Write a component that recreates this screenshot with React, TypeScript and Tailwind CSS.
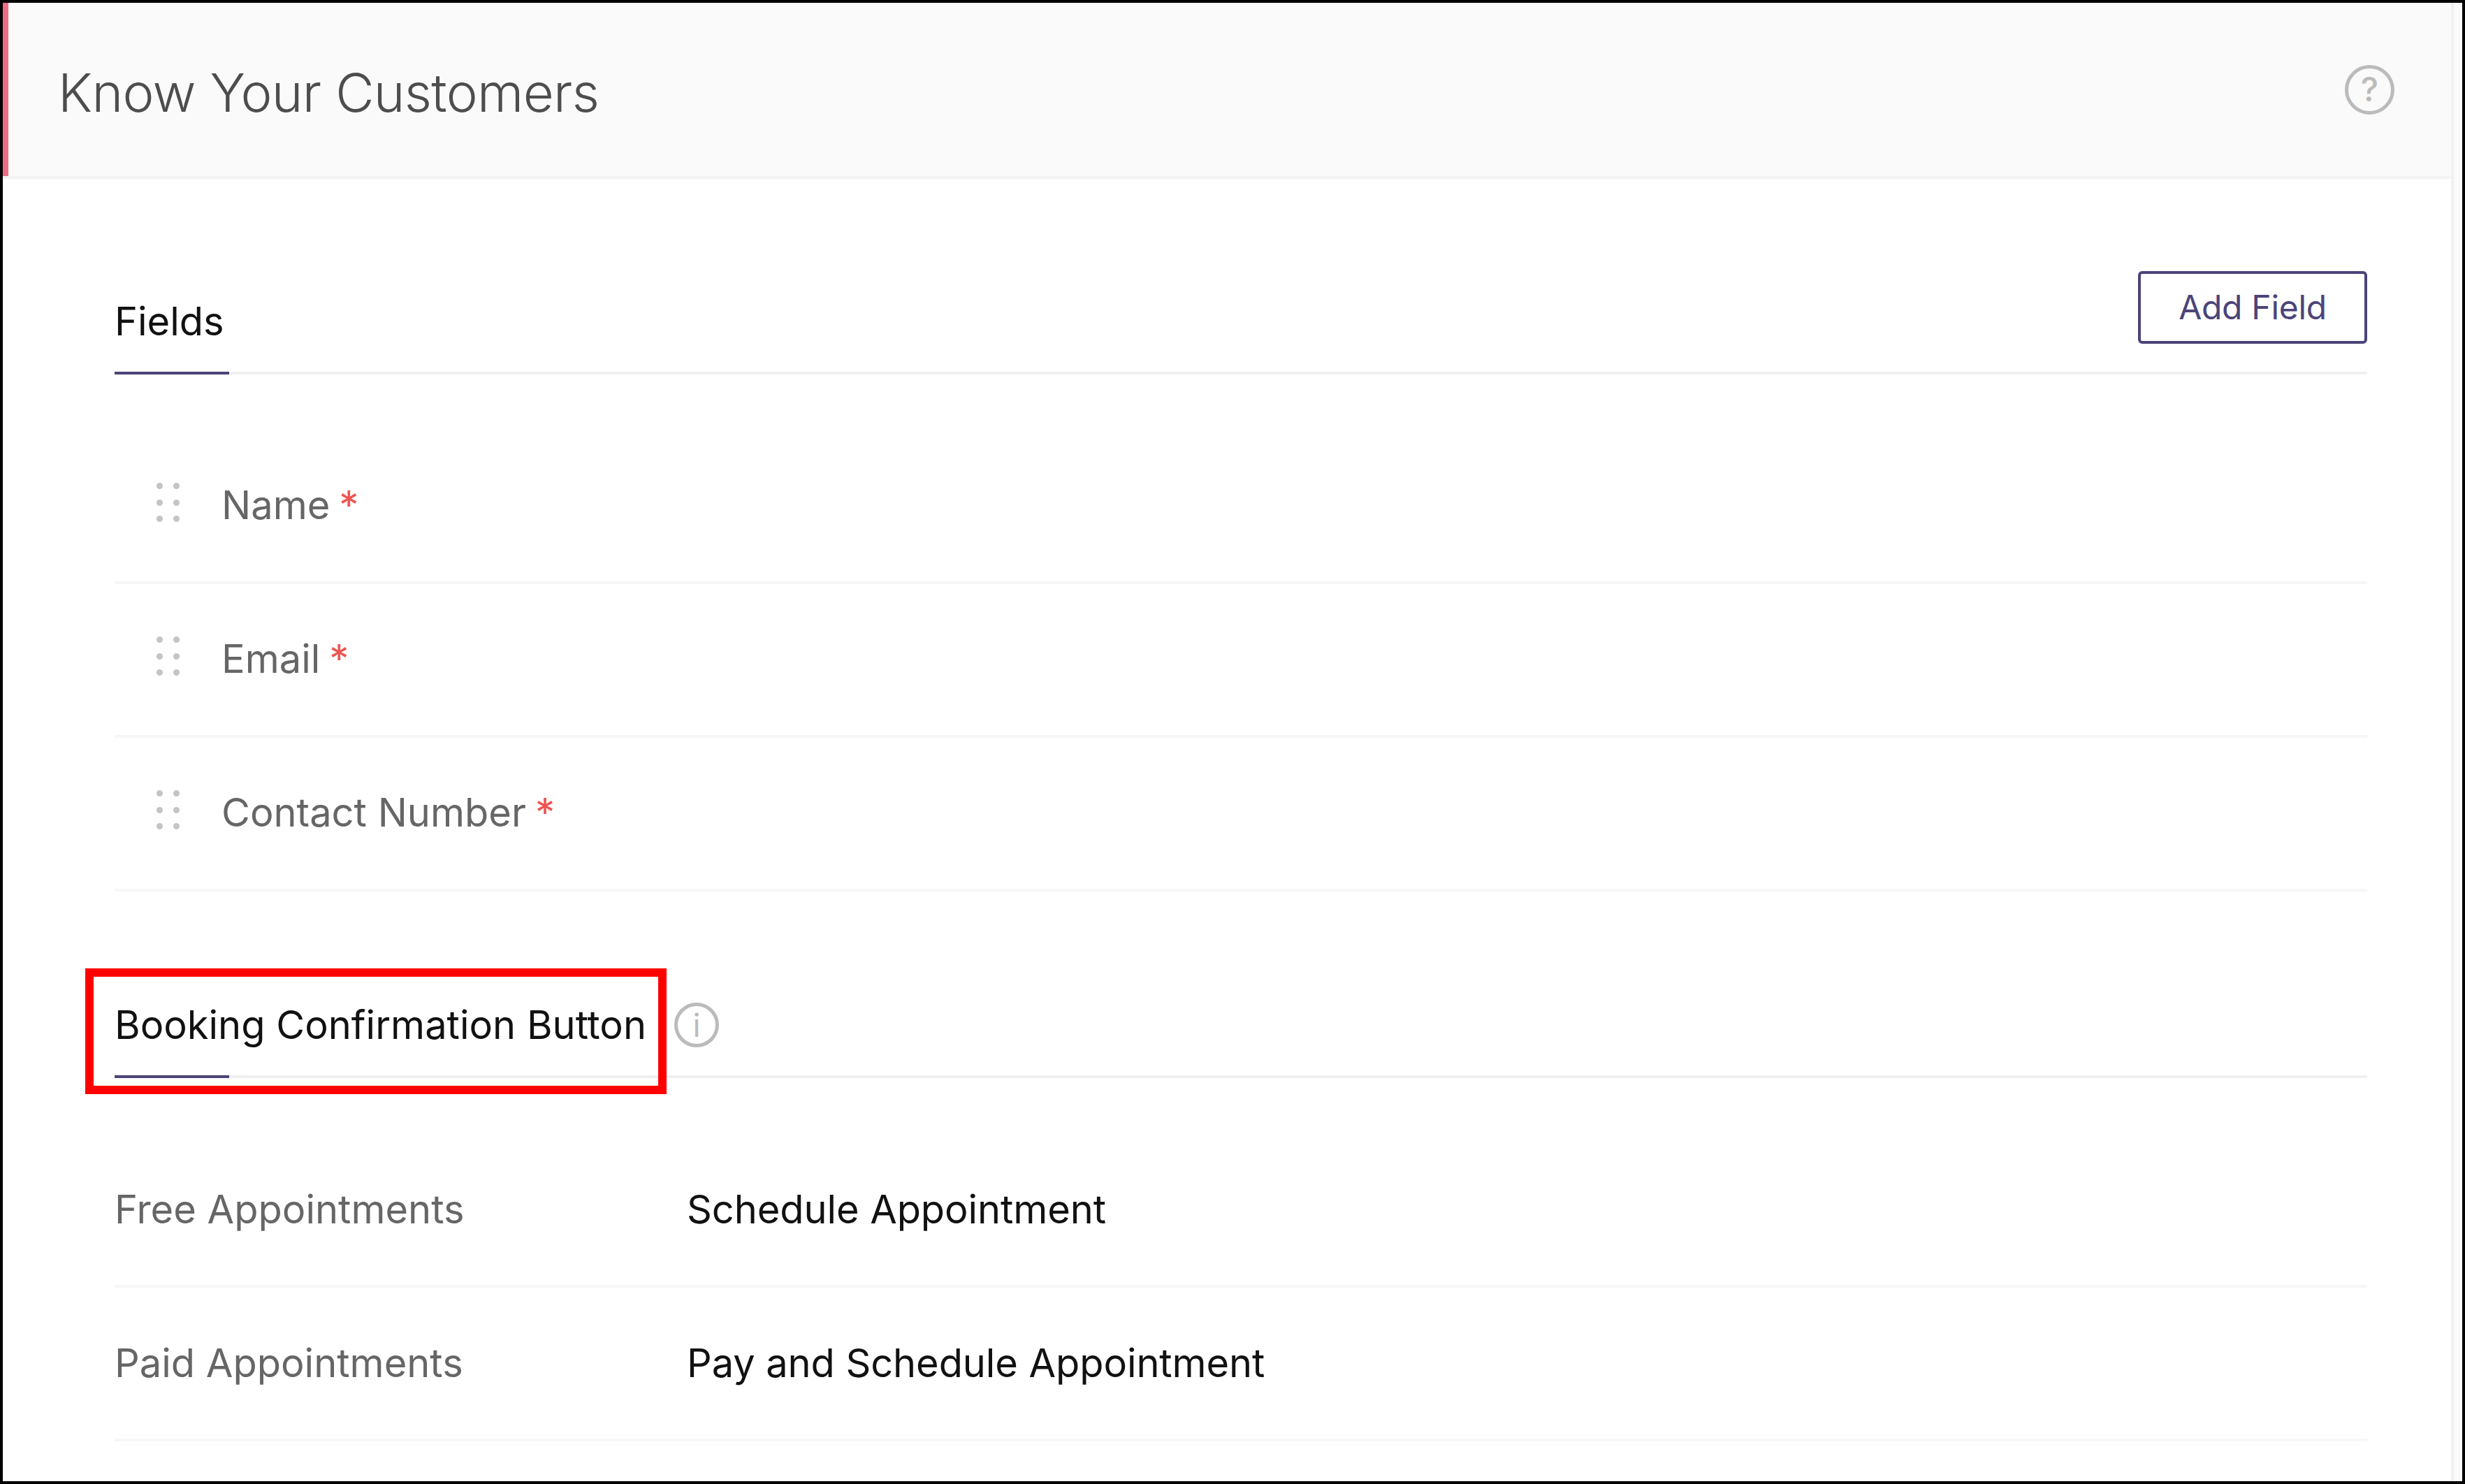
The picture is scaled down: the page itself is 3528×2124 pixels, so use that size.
import React from 'react';

const requiredFields = ['Name', 'Email', 'Contact Number'];

const buttonLabels = [
  { label: 'Free Appointments', value: 'Schedule Appointment' },
  { label: 'Paid Appointments', value: 'Pay and Schedule Appointment' },
];

const DragHandle: React.FC = () => (
  <div className="mb-2 grid w-[33px] grid-cols-2 gap-x-[14px] gap-y-[14.5px]">
    {[0, 1, 2, 3, 4, 5].map((dot) => (
      <span key={dot} className="h-[9px] w-[9px] rounded-full bg-[#c4c4c4]" />
    ))}
  </div>
);

const TabLine: React.FC = () => (
  <div className="h-1 bg-[#f0f0f0]">
    <div className="h-1 w-[164px] bg-[#4b4479]" />
  </div>
);

const App: React.FC = () => {
  return (
    <div className="h-[2124px] w-[3528px] overflow-hidden border-4 border-black bg-[#fafafa] font-['Inter',sans-serif]">
      <div className="mr-3 h-full border-r-4 border-[#f0f0f0] bg-white">
        <header className="border-b-4 border-[#f3f3f3]">
          <div className="flex h-[248px] items-center justify-between border-l-8 border-[#ec6e85] bg-[#fafafa] pr-[81px] pl-[71px]">
            <h1 className="mt-2 text-[76px] leading-none font-light tracking-[-0.7px] text-[#4d4d4d]">Know Your Customers</h1>
            <span className="flex h-[71px] w-[71px] items-center justify-center rounded-full border-[5px] border-[#bbbbbb] text-[48px] leading-none font-medium text-[#bbbbbb]">
              ?
            </span>
          </div>
        </header>

        <main className="pr-[120px] pl-[160px]">
          <section className="pt-[132px]">
            <div className="mb-10 flex items-end justify-between">
              <h2 className="h-16 text-[56px] leading-16 font-normal text-[#111111]">Fields</h2>
              <button className="h-[104px] w-[328px] rounded-md border-4 border-[#4b4479] text-[48px] leading-none tracking-[-0.3px] text-[#4b4479]">
                Add Field
              </button>
            </div>
            <TabLine />
            <div className="pt-20">
              {requiredFields.map((field) => (
                <div key={field} className="flex h-[220px] items-center border-b-4 border-[#f5f6f8] pb-[2px] pl-[60px]">
                  <DragHandle />
                  <span className="ml-[60px] text-[56px] leading-none text-[#666666]">{field}</span>
                  <span className="ml-[13px] text-[56px] leading-none text-[#ef5350]">*</span>
                </div>
              ))}
            </div>
          </section>

          <section className="pt-[159px]">
            <div className="relative mb-10 flex h-16 items-center">
              <h2 className="text-[56px] leading-16 font-normal text-[#111111]">Booking Confirmation Button</h2>
              <span className="ml-10 flex h-16 w-16 items-center justify-center rounded-full border-[5px] border-[#bbbbbb] text-[46px] leading-none font-normal text-[#bbbbbb]">
                i
              </span>
              <div className="absolute top-[-49px] left-[-42px] h-[180px] w-[832px] border-12 border-[#ff0000]" />
            </div>
            <TabLine />
            <div className="pt-20">
              {buttonLabels.map((row) => (
                <div key={row.label} className="flex h-[220px] items-center border-b-4 border-[#f5f6f8] text-[56px] leading-none">
                  <span className="w-[819px] text-[#666666]">{row.label}</span>
                  <span className="tracking-[-0.1px] text-[#111111]">{row.value}</span>
                </div>
              ))}
            </div>
          </section>
        </main>
      </div>
    </div>
  );
};

export default App;
